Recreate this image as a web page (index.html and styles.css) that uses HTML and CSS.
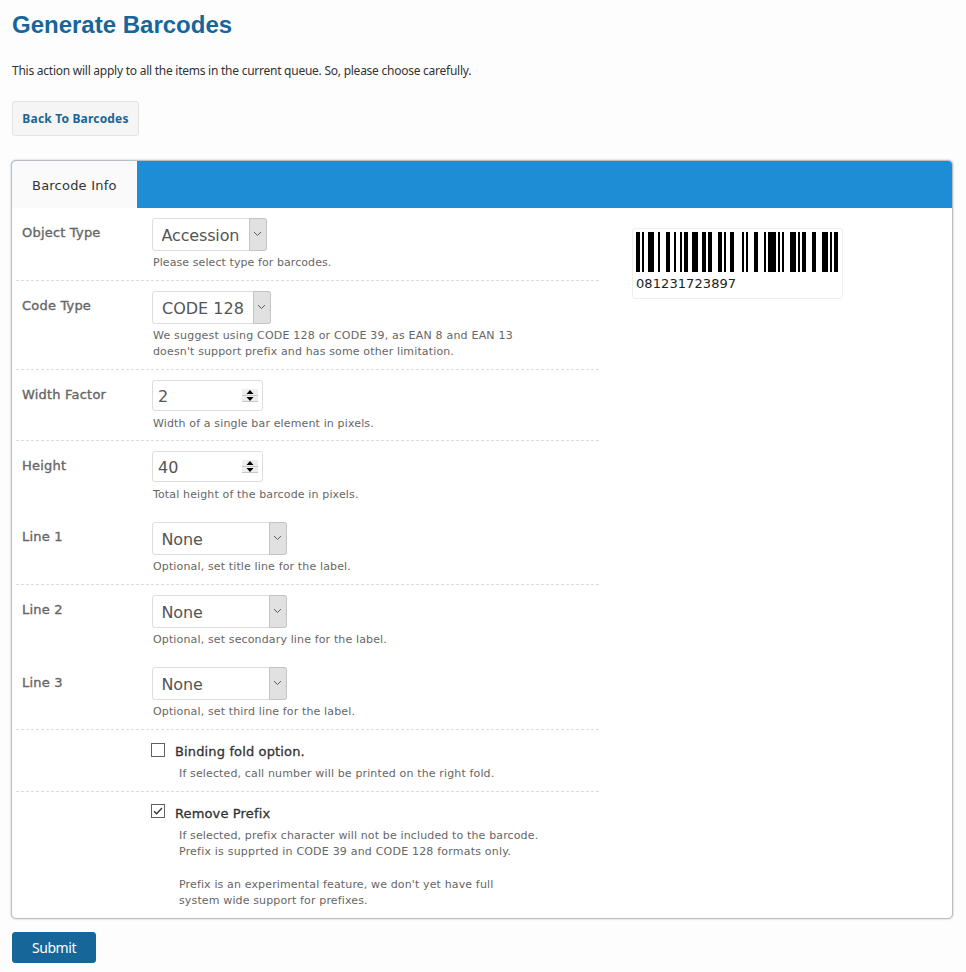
FILE: index.html
```html
<!DOCTYPE html>
<html lang="en">
<head>
<meta charset="utf-8">
<title>Generate Barcodes</title>
<link rel="stylesheet" href="styles.css">
</head>
<body>
<h1>Generate Barcodes</h1>
<p class="intro">This action will apply to all the items in the current queue. So, please choose carefully.</p>
<a class="back" href="#">Back To Barcodes</a>
<form>
<section class="panel">
  <nav class="tabs"><span class="tab">Barcode Info</span></nav>
  <div class="content">
    <div class="fields">
      <div class="row r73">
        <label class="name">Object Type</label>
        <div class="field">
          <div class="select w115"><select class="snug"><option>Accession</option></select><span class="arrow"><svg width="9" height="6" viewBox="0 0 9 6"><path d="M1 1l3.5 3.5L8 1"/></svg></span></div>
          <p class="hint tight">Please select type for barcodes.</p>
        </div>
      </div>
      <div class="row r89">
        <label class="name">Code Type</label>
        <div class="field">
          <div class="select w119"><select><option>CODE 128</option></select><span class="arrow"><svg width="9" height="6" viewBox="0 0 9 6"><path d="M1 1l3.5 3.5L8 1"/></svg></span></div>
          <p class="hint"><span class="wide">We suggest using CODE 128 or CODE 39, as EAN 8 and EAN 13</span><br>doesn't support prefix and has some other limitation.</p>
        </div>
      </div>
      <div class="row r71">
        <label class="name">Width Factor</label>
        <div class="field">
          <div class="number"><input type="number" value="2"><svg class="spin" width="16" height="13" viewBox="0 0 16 13"><path class="key" d="M0 0h16v6H0zM0 7h16v6H0z"/><path class="edge" d="M0 6.500h16M0 12.500h16"/><path d="M4.500 5L8 1l3.500 4zM4.500 8h7L8 12z"/></svg></div>
          <p class="hint">Width of a single bar element in pixels.</p>
        </div>
      </div>
      <div class="row r71 open">
        <label class="name">Height</label>
        <div class="field">
          <div class="number"><input type="number" value="40"><svg class="spin" width="16" height="13" viewBox="0 0 16 13"><path class="key" d="M0 0h16v6H0zM0 7h16v6H0z"/><path class="edge" d="M0 6.500h16M0 12.500h16"/><path d="M4.500 5L8 1l3.500 4zM4.500 8h7L8 12z"/></svg></div>
          <p class="hint">Total height of the barcode in pixels.</p>
        </div>
      </div>
      <div class="row r73">
        <label class="name">Line 1</label>
        <div class="field">
          <div class="select w135"><select class="snug"><option>None</option></select><span class="arrow"><svg width="9" height="6" viewBox="0 0 9 6"><path d="M1 1l3.5 3.5L8 1"/></svg></span></div>
          <p class="hint">Optional, set title line for the label.</p>
        </div>
      </div>
      <div class="row r73 open">
        <label class="name">Line 2</label>
        <div class="field">
          <div class="select w135"><select class="snug"><option>None</option></select><span class="arrow"><svg width="9" height="6" viewBox="0 0 9 6"><path d="M1 1l3.5 3.5L8 1"/></svg></span></div>
          <p class="hint">Optional, set secondary line for the label.</p>
        </div>
      </div>
      <div class="row r72 raised">
        <label class="name">Line 3</label>
        <div class="field">
          <div class="select w135"><select class="snug"><option>None</option></select><span class="arrow"><svg width="9" height="6" viewBox="0 0 9 6"><path d="M1 1l3.5 3.5L8 1"/></svg></span></div>
          <p class="hint">Optional, set third line for the label.</p>
        </div>
      </div>
      <div class="row r62">
        <span class="name"></span>
        <div class="field check">
          <label class="option"><input type="checkbox">Binding fold option.</label>
          <p class="hint">If selected, call number will be printed on the right fold.</p>
        </div>
      </div>
      <div class="row last open">
        <span class="name"></span>
        <div class="field check">
          <label class="option"><span class="tick"><input type="checkbox" checked><svg width="14" height="14" viewBox="0 0 14 14"><path d="M3 7.200l2.600 2.600L11 4"/></svg></span>Remove Prefix</label>
          <p class="hint">If selected, prefix character will not be included to the barcode.<br><span class="wide">Prefix is supprted in CODE 39 and CODE 128 formats only.</span><br><br>Prefix is an experimental feature, we don't yet have full<br>system wide support for prefixes.</p>
        </div>
      </div>
    </div>
    <figure class="preview">
      <svg width="202" height="40" viewBox="0 0 101 40" preserveAspectRatio="none" shape-rendering="crispEdges"><path d="M0 0h2v40h-2zM3 0h1v40h-1zM6 0h3v40h-3zM11 0h1v40h-1zM15 0h2v40h-2zM19 0h1v40h-1zM22 0h1v40h-1zM24 0h2v40h-2zM28 0h3v40h-3zM33 0h2v40h-2zM36 0h2v40h-2zM41 0h2v40h-2zM44 0h1v40h-1zM47 0h2v40h-2zM53 0h1v40h-1zM55 0h1v40h-1zM59 0h2v40h-2zM64 0h1v40h-1zM66 0h4v40h-4zM71 0h1v40h-1zM73 0h1v40h-1zM77 0h3v40h-3zM81 0h1v40h-1zM83 0h2v40h-2zM88 0h2v40h-2zM93 0h3v40h-3zM97 0h1v40h-1zM99 0h2v40h-2z"/></svg>
      <figcaption>081231723897</figcaption>
    </figure>
  </div>
</section>
<button class="submit" type="button">Submit</button>
</form>
</body>
</html>
```
FILE: styles.css
```css
* { box-sizing: border-box; }
body {
  margin: 0;
  padding: 10px 13px 0 11px;
  height: 972px;
  overflow: hidden;
  background: #fdfdfd;
  color: #333;
  font-family: "DejaVu Sans", Verdana, sans-serif;
}
h1 {
  margin: 0 0 0 1px;
  font: bold 24px/30px "Liberation Sans", Arial, sans-serif;
  color: #176699;
}
.intro {
  margin: 22px 0 22px 1px;
  font: 12px/17px "Noto Sans", sans-serif;
  letter-spacing: -.25px;
}
.back {
  display: block;
  width: 127px;
  height: 35px;
  margin-left: 1px;
  border: 1px solid #e3e3e3;
  border-radius: 3px;
  background: #f5f5f5;
  color: #176699;
  font: bold 12px/33px "Noto Sans", sans-serif;
  letter-spacing: .18px;
  text-align: center;
  text-decoration: none;
}
.panel {
  width: 942px;
  height: 759px;
  margin-top: 24px;
  border: 1px solid #bbbcc4;
  border-radius: 5px;
  background: #fff;
  box-shadow: 0 0 2px rgba(0, 0, 0, .3);
  overflow: hidden;
}
.tabs { display: flex; height: 47px; background: #1f8dd6; }
.tab {
  width: 125px;
  padding-left: 20px;
  background: #fafafa;
  font-size: 13px;
  line-height: 49px;
  letter-spacing: .22px;
}
.content { display: flex; }
.fields { width: 583px; margin-left: 4px; }
.row {
  display: flex;
  padding-top: 10px;
  border-bottom: 1px dashed #ddd;
}
.open { border-bottom-color: transparent; }
.r62 { height: 62px; }
.r71 { height: 71px; }
.r72 { height: 72px; }
.r73 { height: 73px; }
.r89 { height: 89px; }
.last { height: 125px; }
.name {
  width: 136px;
  padding: 6px 0 0 6px;
  color: #666;
  font-size: 13px;
  line-height: 17px;
  letter-spacing: .2px;
  -webkit-text-stroke: .35px #666;
}
.select { display: flex; position: relative; height: 33px; }
.raised .select { margin: -1px 0 1px; }
.w115 { width: 115px; }
.w119 { width: 119px; }
.w135 { width: 135px; }
select, .number input {
  width: 100%;
  border: 1px solid #ddd;
  border-radius: 3px;
  background: #fff;
  color: #555;
  font: 16px "DejaVu Sans", Verdana, sans-serif;
  outline: 0;
}
select { appearance: none; padding: 1px 0 0 9px; }
.snug { padding-left: 8.500px; letter-spacing: -.15px; }
.arrow {
  display: flex;
  position: absolute;
  top: 0;
  right: 0;
  width: 18px;
  height: 33px;
  padding: 12px 0 0 3px;
  border: 1px solid #c4c4c4;
  border-radius: 0 3px 3px 0;
  background: #e1e1e1;
  pointer-events: none;
}
.arrow path { fill: none; stroke: #606060; }
.number { position: relative; width: 111px; height: 31px; }
.number input { height: 31px; padding: 1px 5px 0; appearance: textfield; display: block; }
.spin { position: absolute; right: 5px; top: 9px; }
.key { fill: #eee; }
.edge { stroke: #c8c8c8; }
.hint {
  margin: 4px 0 0 1px;
  color: #666;
  font-size: 11px;
  line-height: 16px;
  letter-spacing: .14px;
  white-space: nowrap;
}
.tight { letter-spacing: .08px; }
.wide { letter-spacing: .2px; }
.number + .hint { margin-top: 5px; }
.option {
  display: flex;
  align-items: center;
  height: 22px;
  margin-left: -1px;
  font-size: 13px;
  letter-spacing: .14px;
  -webkit-text-stroke: .3px #333;
}
.option input {
  appearance: none;
  width: 14px;
  height: 14px;
  margin: -3px 10px 0 0;
  border: 1px solid #606060;
  background: #fff;
}
.tick { position: relative; display: flex; margin-top: -1px; }
.tick svg { position: absolute; left: 0; top: -3px; }
.tick path { fill: none; stroke: #333; stroke-width: 1.3; }
.check .hint { margin: 4px 0 0 27px; line-height: 16.300px; }
.preview {
  width: 211px;
  height: 71px;
  margin: 20px 0 0 33px;
  padding: 3px;
  border: 1px solid #eee;
  border-radius: 3px;
}
.preview svg { display: block; }
figcaption { margin-top: 3px; color: #222; font-size: 13px; line-height: 18px; letter-spacing: .08px; }
.submit {
  display: block;
  width: 84px;
  height: 31px;
  margin: 13px 0 0 1px;
  padding: 0;
  border: 1px solid #176699;
  border-radius: 3px;
  background: #176699;
  color: #fff;
  font: 14px "Noto Sans", sans-serif;
  letter-spacing: -.45px;
}
```
